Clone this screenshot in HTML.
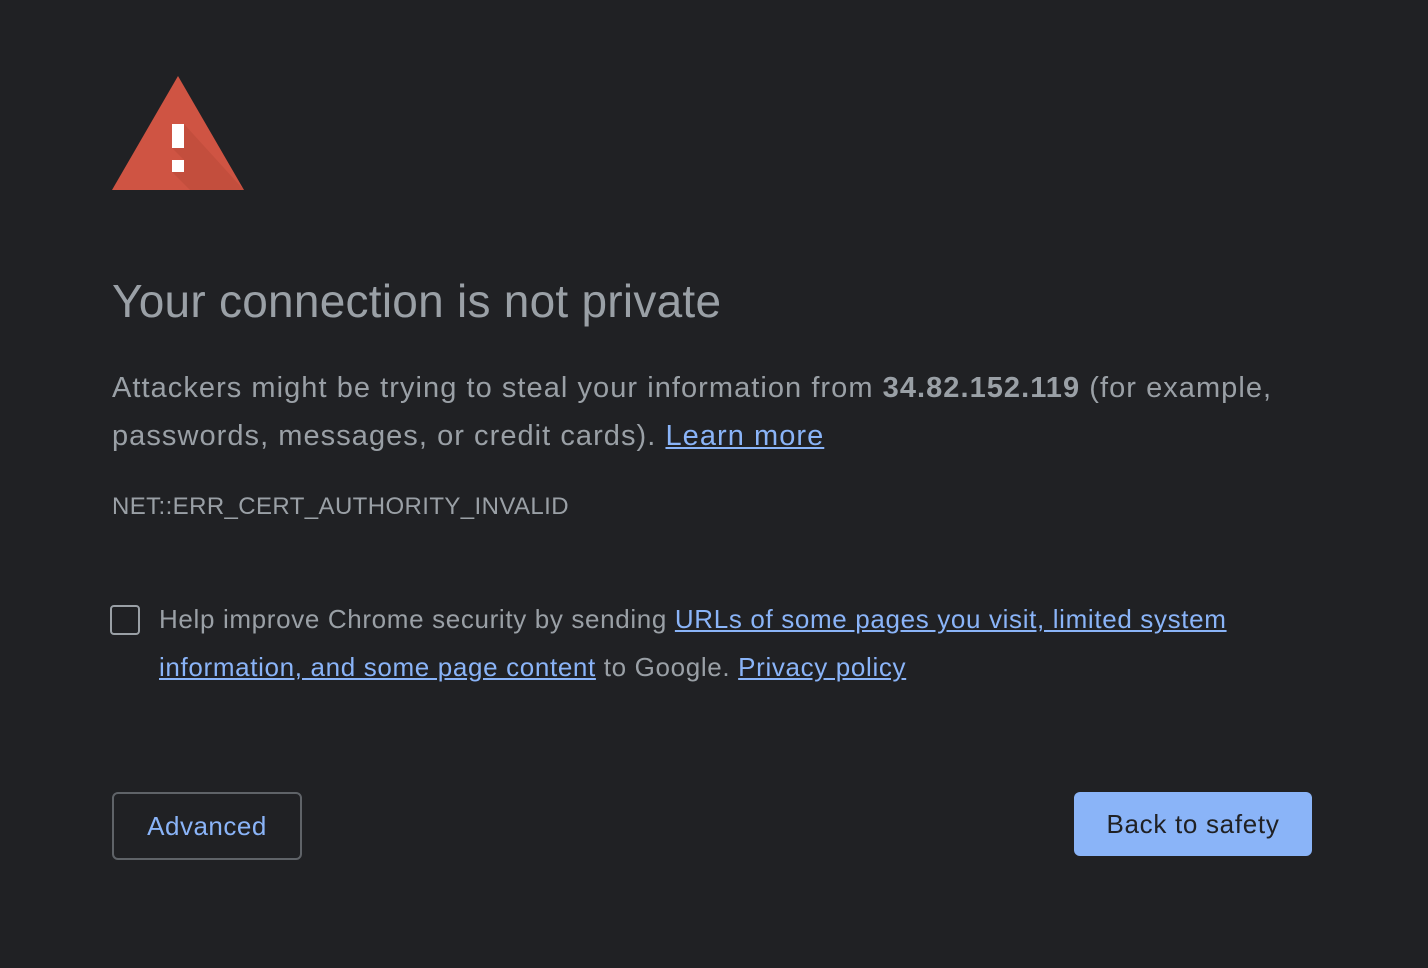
<!DOCTYPE html>
<html><head><style>
body{margin:0;background:#202124;width:1428px;height:968px;overflow:hidden;font-family:"Liberation Sans",sans-serif;color:#9aa0a6;position:relative}
.abs{position:absolute;white-space:nowrap}
a{color:#8ab4f8;text-decoration:underline}
h1{position:absolute;left:112px;top:274px;margin:0;font-weight:normal;font-size:46px;color:#9aa0a6;letter-spacing:0.25px;white-space:nowrap}
.p{left:112px;font-size:29px;line-height:48px;letter-spacing:1.05px}
.cb{position:absolute;left:110px;top:605px;width:30px;height:30px;border:2px solid #9aa0a6;border-radius:4px;box-sizing:border-box}
.h{left:159px;font-size:26px;line-height:48px;letter-spacing:0.65px}
.btn1{position:absolute;left:112px;top:792px;width:190px;height:68px;box-sizing:border-box;border:2px solid #5f6368;border-radius:6px;color:#8ab4f8;font-size:26px;text-align:center;line-height:64px;letter-spacing:0.5px}
.btn2{position:absolute;left:1074px;top:792px;width:238px;height:64px;background:#8ab4f8;border-radius:6px;color:#202124;font-size:26px;text-align:center;line-height:64px;letter-spacing:0.7px}
</style></head><body>
<svg class="abs" style="left:0;top:0" width="300" height="220">
<polygon points="178,76 244,190 112,190" fill="#cf5443"/>
<polygon points="184,124 244,190 190,190 172,172 172,160 184,160 172,148" fill="#b84738" opacity="0.5"/>
<rect x="172" y="124" width="12" height="24" fill="#fff"/>
<rect x="172" y="160" width="12" height="12" fill="#fff"/>
</svg>
<h1>Your connection is not private</h1>
<div class="abs p" style="top:364px">Attackers might be trying to steal your information from <b>34.82.152.119</b> (for example,</div>
<div class="abs p" style="top:412px">passwords, messages, or credit cards). <a>Learn more</a></div>
<div class="abs" style="left:112px;top:493px;font-size:24px;letter-spacing:0.4px">NET::ERR_CERT_AUTHORITY_INVALID</div>
<div class="cb"></div>
<div class="abs h" style="top:595px">Help improve Chrome security by sending <a>URLs of some pages you visit, limited system</a></div>
<div class="abs h" style="top:643px"><a>information, and some page content</a> to Google. <a>Privacy policy</a></div>
<div class="btn1">Advanced</div>
<div class="btn2">Back to safety</div>
</body></html>
